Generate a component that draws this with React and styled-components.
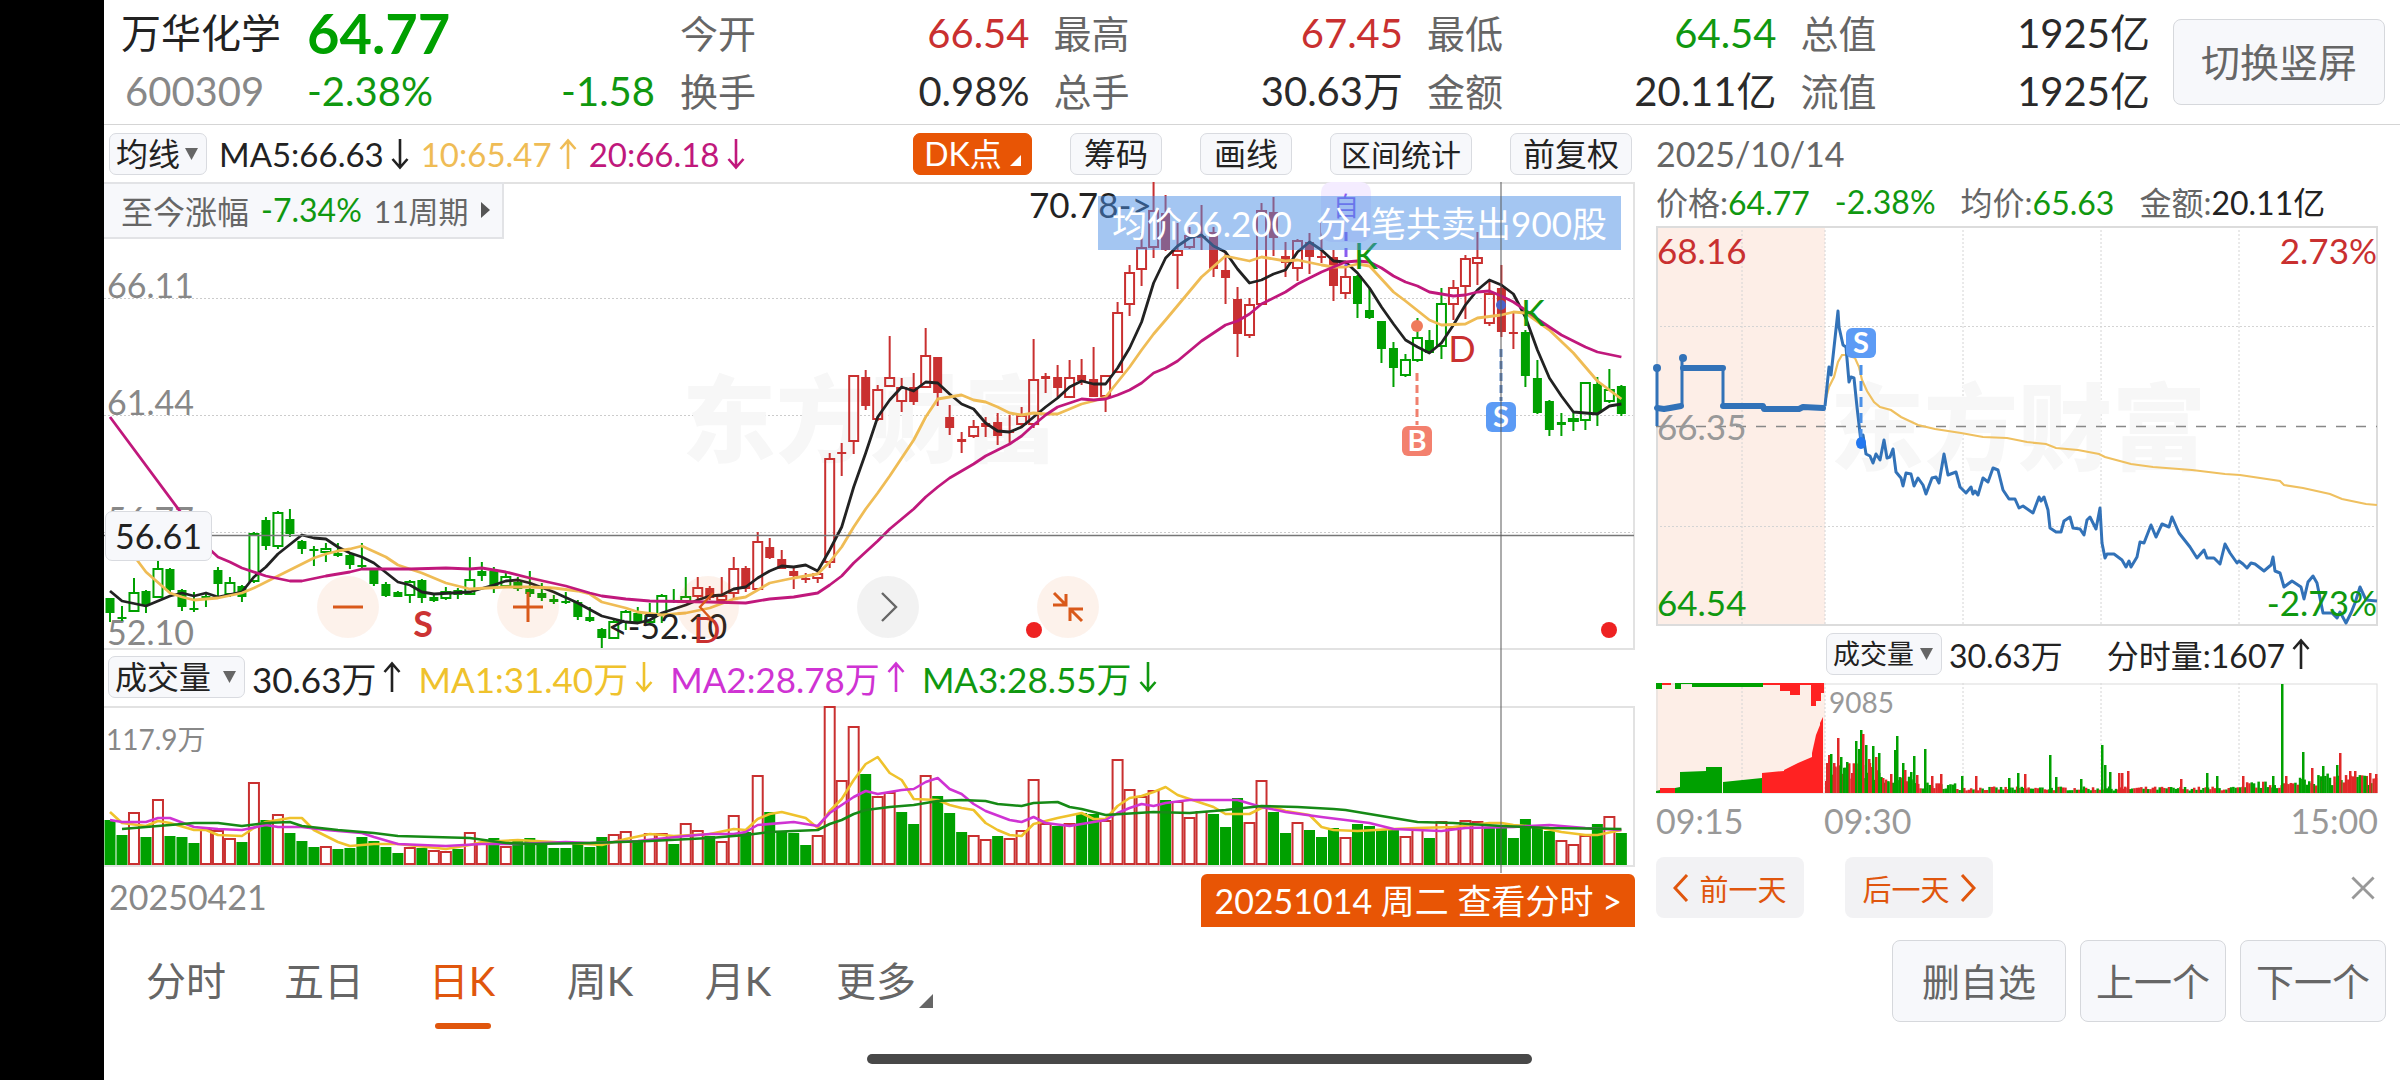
import React from 'react';
import styled, { createGlobalStyle } from 'styled-components';

const UP = '#c93030';
const DOWN = '#00a000';
const ORANGE = '#e85505';
const FONT = 'Lato, "Noto Sans CJK SC", sans-serif';

const GlobalStyle = createGlobalStyle`
	* {
		box-sizing: border-box;
	}

	body {
		margin: 0;
		background: #fff;
		color: #222;
		font-family: ${FONT};
	}

	button,
	select {
		margin: 0;
		padding: 0;
		border: 0;
		background: none;
		color: inherit;
		font: inherit;
		cursor: pointer;
	}
`;

/* ---------- data ---------- */

// [kind, high, bodyTop, bodyBottom, low], upper case kinds are filled
const CANDLES = [
	['G', 416, 416, 431, 440], ['g', 424, 435, 437, 439], ['g', 396, 410, 430, 430], ['G', 408, 409, 423, 431],
	['g', 379, 386, 416, 416], ['G', 386, 387, 408, 410], ['G', 407, 408, 425, 429], ['g', 410, 426, 428, 430],
	['g', 411, 414, 417, 425], ['G', 385, 388, 402, 414], ['g', 395, 400, 413, 415], ['G', 403, 404, 415, 420],
	['g', 350, 351, 400, 401], ['G', 335, 338, 364, 368], ['g', 329, 330, 365, 367], ['G', 327, 337, 352, 355],
	['G', 358, 359, 367, 372], ['g', 364, 367, 369, 384], ['g', 361, 366, 371, 380], ['g', 361, 371, 374, 375],
	['G', 372, 373, 383, 387], ['g', 361, 383, 385, 386], ['G', 386, 387, 402, 404], ['G', 400, 402, 414, 415],
	['G', 409, 410, 415, 415], ['g', 398, 399, 414, 421], ['G', 397, 398, 416, 421], ['G', 413, 415, 419, 420],
	['g', 405, 409, 417, 418], ['G', 406, 408, 413, 417], ['g', 375, 397, 413, 413], ['G', 380, 389, 394, 399],
	['G', 385, 389, 405, 411], ['g', 391, 394, 405, 406], ['G', 395, 400, 407, 409], ['G', 389, 407, 412, 415],
	['G', 401, 411, 416, 419], ['G', 413, 417, 420, 422], ['g', 410, 419, 420, 422], ['G', 418, 420, 435, 438],
	['G', 425, 435, 439, 440], ['G', 446, 447, 456, 466], ['g', 438, 439, 457, 457], ['g', 428, 429, 441, 448],
	['G', 425, 431, 441, 442], ['g', 421, 433, 441, 441], ['g', 412, 413, 433, 441], ['g', 407, 418, 420, 421],
	['g', 395, 414, 420, 420], ['r', 395, 405, 415, 417], ['R', 404, 406, 416, 418], ['r', 395, 413, 419, 422],
	['r', 375, 386, 412, 416], ['R', 384, 386, 407, 410], ['r', 350, 359, 408, 409], ['R', 356, 365, 376, 377],
	['R', 368, 377, 387, 387], ['R', 385, 389, 394, 407], ['R', 391, 396, 397, 401], ['r', 390, 391, 397, 401],
	['r', 271, 276, 381, 386], ['r', 261, 270, 271, 294], ['r', 193, 193, 260, 272], ['R', 188, 195, 224, 228],
	['r', 203, 207, 238, 239], ['r', 154, 195, 205, 205], ['r', 196, 205, 220, 230], ['R', 191, 205, 220, 223],
	['r', 146, 173, 206, 206], ['R', 175, 175, 211, 224], ['R', 223, 235, 246, 253], ['R', 250, 257, 260, 271],
	['r', 238, 244, 255, 256], ['R', 235, 241, 245, 255], ['R', 231, 240, 254, 263], ['r', 233, 249, 250, 261],
	['r', 225, 233, 243, 244], ['r', 157, 197, 243, 246], ['R', 191, 194, 197, 211], ['R', 183, 195, 206, 215],
	['r', 178, 195, 216, 216], ['R', 177, 193, 199, 203], ['R', 165, 197, 215, 215], ['r', 193, 193, 215, 230],
	['r', 120, 130, 191, 191], ['r', 83, 90, 123, 134], ['r', 51, 65, 88, 104], ['r', 0, 28, 66, 76],
	['R', 13, 31, 68, 69], ['r', 41, 68, 74, 107], ['r', 45, 53, 66, 67], ['r', 23, 54, 55, 68],
	['R', 45, 50, 87, 95], ['R', 70, 88, 96, 122], ['R', 105, 117, 152, 175], ['r', 116, 122, 154, 156],
	['r', 21, 28, 123, 123], ['R', 15, 30, 56, 74], ['R', 60, 74, 81, 95], ['r', 57, 58, 87, 99],
	['R', 51, 60, 75, 92], ['r', 41, 74, 75, 81], ['R', 68, 75, 104, 119], ['r', 83, 94, 112, 117],
	['G', 93, 94, 122, 136], ['G', 106, 128, 136, 137], ['G', 139, 139, 167, 181], ['G', 160, 166, 186, 205],
	['g', 172, 177, 194, 195], ['g', 136, 155, 179, 180], ['G', 148, 158, 171, 171], ['g', 106, 121, 165, 177],
	['r', 98, 105, 123, 138], ['r', 73, 76, 105, 137], ['r', 50, 75, 82, 103], ['r', 100, 111, 142, 144],
	['R', 83, 106, 150, 155], ['R', 130, 150, 152, 167], ['G', 148, 150, 194, 205], ['G', 178, 196, 231, 232],
	['G', 218, 219, 248, 254], ['G', 231, 240, 243, 254], ['g', 231, 236, 240, 249], ['g', 200, 200, 239, 248],
	['G', 195, 202, 231, 244], ['g', 187, 207, 220, 221], ['G', 203, 204, 232, 234],
];

// averages are stored as [candle index, y]
const MA5 = [
	[0, 409], [1, 419], [3, 424], [5, 414], [6, 411], [7, 414], [8, 411], [9, 415], [11, 410], [12, 395], [13, 385],
	[14, 372], [16, 353], [17, 356], [18, 357], [19, 365], [20, 371], [21, 375], [22, 381], [24, 400], [25, 403],
	[26, 410], [27, 412], [30, 410], [32, 403], [33, 399], [34, 398], [35, 401], [37, 410], [39, 421], [41, 434],
	[42, 437], [43, 440], [44, 441], [45, 438], [46, 431], [48, 423], [49, 418], [50, 414], [51, 413], [52, 407],
	[53, 405], [54, 396], [55, 389], [56, 384], [57, 385], [58, 383], [59, 389], [60, 368], [61, 345], [62, 305],
	[63, 271], [64, 235], [65, 218], [66, 205], [67, 209], [68, 200], [69, 201], [70, 212], [71, 222], [72, 227],
	[73, 241], [74, 249], [75, 250], [76, 245], [77, 235], [78, 225], [79, 216], [80, 205], [81, 199], [82, 202],
	[83, 202], [84, 186], [85, 166], [86, 140], [87, 101], [88, 76], [89, 64], [90, 56], [91, 53], [92, 64],
	[93, 70], [94, 87], [95, 101], [96, 98], [97, 92], [98, 88], [99, 70], [100, 60], [101, 68], [102, 79],
	[103, 80], [104, 91], [105, 106], [106, 125], [107, 142], [108, 158], [109, 165], [110, 171], [111, 161],
	[112, 143], [113, 123], [114, 108], [115, 98], [116, 103], [117, 112], [118, 135], [119, 168], [120, 196],
	[121, 214], [122, 230], [124, 232], [125, 224], [126, 222],
];
const MA10 = [
	[1, 358], [3, 390], [5, 411], [6, 415], [7, 418], [9, 416], [11, 411], [12, 406], [15, 388], [17, 376],
	[18, 372], [19, 369], [20, 367], [21, 364], [23, 375], [24, 383], [26, 391], [28, 401], [30, 407], [33, 405],
	[35, 405], [37, 406], [39, 409], [40, 412], [41, 420], [43, 426], [44, 430], [46, 433], [48, 431], [50, 426],
	[52, 417], [53, 415], [55, 401], [57, 396], [59, 392], [60, 380], [61, 365], [62, 345], [63, 327], [64, 311],
	[65, 294], [66, 276], [67, 258], [68, 235], [69, 217], [70, 215], [71, 213], [72, 218], [73, 220], [74, 225],
	[75, 231], [76, 233], [77, 231], [78, 232], [79, 232], [80, 227], [81, 222], [82, 219], [83, 215], [84, 200],
	[85, 185], [86, 168], [87, 152], [88, 138], [91, 95], [93, 74], [95, 79], [96, 75], [98, 79], [99, 78],
	[101, 83], [102, 85], [103, 85], [104, 82], [105, 84], [107, 110], [108, 119], [110, 138], [111, 143],
	[113, 142], [114, 136], [116, 133], [117, 130], [118, 131], [120, 148], [122, 171], [123, 185], [124, 199],
	[125, 208], [126, 217],
];
const MA20 = [
	[0, 235], [6, 332], [8, 364], [9, 375], [10, 380], [11, 386], [13, 394], [15, 399], [16, 399], [18, 394],
	[20, 390], [21, 387], [25, 387], [28, 386], [30, 387], [31, 386], [33, 390], [35, 396], [38, 404], [40, 411],
	[41, 414], [43, 417], [45, 419], [50, 420], [53, 421], [55, 417], [57, 415], [59, 411], [60, 403], [61, 394],
	[62, 381], [63, 370], [64, 359], [65, 347], [66, 337], [67, 327], [68, 315], [69, 305], [70, 296], [71, 289],
	[72, 282], [73, 274], [74, 268], [75, 262], [76, 254], [77, 243], [78, 233], [79, 225], [80, 221], [81, 217],
	[82, 218], [83, 217], [84, 213], [85, 208], [86, 201], [87, 191], [88, 186], [89, 179], [91, 159], [93, 143],
	[94, 139], [95, 132], [96, 122], [98, 110], [99, 102], [101, 90], [103, 80], [104, 79], [105, 80], [106, 86],
	[107, 94], [108, 100], [109, 104], [110, 110], [112, 114], [113, 113], [114, 110], [115, 109], [116, 114],
	[117, 120], [118, 128], [119, 137], [120, 145], [121, 153], [122, 159], [123, 165], [124, 170], [126, 175],
];

// bar heights, negative for a falling day
const VOLUMES = [
	-45, -30, 53, -28, 66, -29, -28, -22, 36, 35, 27, -23, 83, -45, 51, -32, -24, -18, 19, -16, -17, -28, -24, -18,
	-12, 18, -17, 15, 14, -16, 33, 23, -27, 19, -24, -27, -23, -17, -17, -22, -18, -28, 31, 34, -24, 32, 32, -21,
	42, 35, -29, 24, 50, -33, 90, -53, -34, -32, -20, 30, 159, 85, 139, -91, 69, 73, -53, -41, 90, -69, -52, -33,
	30, 26, -29, 27, 35, 86, 42, -39, 42, -52, -51, 45, 106, 76, 69, 75, -65, 64, 48, 54, -51, -38, -67, 43, 85,
	-53, -32, 43, -35, -28, -37, 28, -41, -39, -35, -36, 29, 38, -27, 44, 38, 45, 44, -38, -39, -27, -46, -38,
	-34, 25, 21, 30, -41, 49, -32,
];
const VOL_MA1 = [
	[0, 106], [1, 117], [3, 120], [4, 115], [5, 117], [7, 124], [8, 124], [9, 129], [11, 130], [12, 122],
	[13, 116], [15, 112], [16, 112], [17, 124], [19, 136], [20, 140], [22, 138], [24, 138], [28, 143], [30, 139],
	[31, 136], [34, 134], [37, 136], [41, 139], [43, 133], [45, 128], [47, 130], [50, 128], [52, 123], [53, 124],
	[54, 113], [55, 108], [56, 106], [58, 112], [59, 122], [60, 105], [61, 93], [62, 74], [63, 58], [64, 51],
	[65, 67], [66, 74], [67, 93], [69, 94], [70, 99], [71, 102], [72, 104], [73, 117], [74, 124], [75, 129],
	[76, 130], [77, 118], [78, 115], [79, 112], [81, 107], [82, 113], [83, 113], [84, 100], [85, 92], [86, 90],
	[87, 86], [88, 81], [89, 89], [91, 97], [92, 101], [93, 108], [95, 108], [96, 102], [97, 101], [98, 105],
	[100, 109], [101, 121], [102, 124], [104, 125], [107, 123], [109, 122], [112, 121], [115, 117], [116, 117],
	[117, 119], [119, 121], [121, 126], [123, 129], [124, 129], [126, 124],
];
const VOL_MA2 = [
	[0, 114], [1, 116], [3, 116], [4, 112], [5, 112], [7, 121], [9, 123], [11, 124], [13, 119], [14, 121],
	[16, 121], [18, 124], [21, 127], [22, 131], [24, 138], [28, 140], [31, 138], [34, 138], [38, 136], [40, 137],
	[44, 135], [48, 130], [50, 128], [52, 128], [53, 126], [54, 119], [57, 116], [59, 120], [60, 107], [62, 91],
	[63, 85], [64, 88], [66, 84], [67, 83], [68, 76], [69, 72], [70, 83], [71, 88], [72, 98], [73, 105],
	[75, 114], [76, 116], [77, 111], [78, 117], [80, 120], [83, 114], [84, 107], [85, 102], [86, 98], [87, 100],
	[88, 97], [90, 94], [94, 94], [96, 101], [98, 106], [101, 111], [103, 114], [105, 117], [107, 123],
	[111, 125], [113, 122], [117, 121], [120, 119], [123, 122], [126, 124],
];
const VOL_MA3 = [
	[1, 123], [3, 121], [4, 120], [7, 117], [9, 117], [11, 120], [13, 117], [15, 116], [16, 120], [19, 124],
	[22, 127], [24, 130], [30, 132], [33, 137], [35, 138], [40, 137], [45, 135], [50, 132], [53, 129], [55, 126],
	[59, 124], [60, 118], [61, 114], [62, 108], [63, 104], [65, 101], [67, 99], [69, 95], [71, 94], [73, 95],
	[74, 98], [76, 100], [77, 97], [79, 96], [80, 101], [81, 103], [83, 109], [87, 106], [90, 107], [93, 104],
	[96, 100], [99, 101], [102, 103], [103, 104], [105, 108], [109, 116], [112, 117], [116, 120], [120, 122],
	[126, 123],
];

const MINUTE_PRICE =
	'169,180 173,141 175,149 182,85 183,101 187,119 190,121 193,156 195,151 198,152 201,181 205,216 207,209 210,228 214,230 217,237 220,228 224,234 228,214 231,232 234,231 237,223 240,246 245,252 247,260 250,247 255,248 258,260 262,252 267,259 270,268 276,252 280,251 283,257 288,228 292,249 300,246 304,261 310,267 315,261 317,268 319,265 322,269 327,252 332,256 337,242 342,244 347,264 353,273 359,273 363,282 367,280 377,287 383,271 385,275 388,271 392,284 394,302 400,306 405,306 408,295 414,291 417,302 424,303 428,309 431,294 434,291 440,303 444,282 446,317 449,332 451,328 458,328 466,334 470,341 473,335 475,341 481,331 484,316 488,317 495,299 500,311 506,298 513,301 516,291 523,307 534,321 541,332 548,324 551,332 558,332 564,338 569,318 574,327 581,337 583,335 587,338 591,342 595,337 599,338 608,345 615,339 617,331 619,345 624,347 628,361 636,355 645,361 648,373 652,356 657,350 661,357 667,387 676,387 681,392 684,386 690,397 695,387 699,377 704,361 710,374 721,375';
const MINUTE_AVERAGE =
	'169,176 173,161 178,151 182,136 186,129 191,129 199,132 203,141 206,154 211,165 218,176 224,181 235,184 245,191 262,199 279,203 305,207 327,211 351,212 371,216 390,218 400,222 422,224 443,228 449,231 475,238 497,241 536,244 569,248 584,249 624,255 628,259 647,262 674,268 686,273 710,278 721,279';

// [x, height], negative heights are sell-side minutes
const MINUTE_PEAKS = [
	[171, 30], [173, 38], [175, -39], [178, 30], [182, 55], [185, -36], [188, -25], [191, -31], [196, 20],
	[200, -52], [203, -44], [205, -63], [207, 59], [210, -48], [213, 34], [217, -47], [220, 36], [223, -40],
	[227, 15], [235, 19], [239, -43], [241, -57], [247, -30], [249, 23], [255, -21], [258, -37], [261, 18],
	[269, -44], [276, 17], [285, 19], [306, -17], [320, 17], [353, -15], [362, -20], [369, 19], [394, -38],
	[400, -16], [425, -14], [446, -48], [449, -28], [454, -21], [463, 20], [466, 20], [472, 22], [525, 14],
	[551, -20], [561, -17], [587, 17], [617, -17], [626, -109], [630, 17], [647, -41], [656, 25], [667, -27],
	[681, -28], [684, 40], [694, 22], [699, 22], [709, -17], [714, 20], [720, 19],
];

// pre-open auction: [from, to, startHeight, endHeight, colour]
const AUCTION_MATCHED = [
	[0, 4, 2, 3, DOWN], [4, 19, 5, 5, '#f22'], [19, 24, 5, 6, DOWN], [24, 50, 21, 22, DOWN], [50, 66, 26, 26, DOWN],
	[67, 106, 11, 15, DOWN], [106, 128, 20, 22, '#f22'], [128, 142, 23, 30, '#f22'], [142, 156, 30, 36, '#f22'],
	[156, 160, 40, 58, '#f22'], [160, 164, 58, 68, '#f22'], [164, 167, 70, 76, '#f22'],
];
const AUCTION_LEFT = [
	[0, 6, 6, DOWN], [6, 15, 2, '#f22'], [19, 25, 6, DOWN], [25, 36, 1, DOWN], [36, 107, 4, DOWN], [107, 124, 2, '#f22'],
	[124, 134, 8, '#f22'], [134, 144, 12, '#f22'], [144, 155, 2, '#f22'], [155, 160, 23, '#f22'],
	[160, 165, 18, '#f22'], [165, 168, 10, '#f22'],
];

const STATS = [
	[['今开', '66.54', UP], ['换手', '0.98%']],
	[['最高', '67.45', UP], ['总手', '30.63万']],
	[['最低', '64.54', '#109810'], ['金额', '20.11亿']],
	[['总值', '1925亿'], ['流值', '1925亿']],
];
const TABS = ['分时', '五日', '日K', '周K', '月K', '更多'];

const candleX = i => 6 + i * 11.995;
const toPoints = list => list.map(([i, y]) => `${candleX(i).toFixed(1)},${y}`).join(' ');

function minuteBars() {
	const bars = [];
	let seed = 7;
	const random = () => {
		seed = (seed * 16807) % 2147483647;
		return seed / 2147483647;
	};
	for (let x = 170; x < 721; x += 2.3) {
		let base = 5;
		if (x < 225) base = 24;
		else if (x < 262) base = 13;
		else if (x < 300) base = 8;
		else if (x > 640) base = 15;
		else if (x > 590) base = 9;
		const height = base * (0.5 + random() * 0.8);
		bars.push({ x, height, color: random() > 0.5 ? '#e02828' : DOWN });
	}
	MINUTE_PEAKS.forEach(([x, h]) => {
		bars.push({ x, height: Math.abs(h), color: h > 0 ? '#e02828' : DOWN });
	});
	return bars;
}
const MINUTE_BARS = minuteBars();

/* ---------- layout ---------- */

const Screen = styled.div`
	display: grid;
	grid-template-columns: 104px minmax(0, 1fr);
	min-height: 100vh;
`;

const Bezel = styled.div`
	background: #000;
`;

const Page = styled.div`
	display: flex;
	flex-direction: column;
`;

const Header = styled.header`
	display: flex;
	align-items: center;
	height: 125px;
	padding: 0 15px 0 17px;
	border-bottom: 1px solid #d5d5d5;
	font-size: 40px;
`;

const Identity = styled.div`
	display: grid;
	grid-template-columns: 186px 120px 228px;
	width: 559px;
	line-height: 58px;
`;

const Name = styled.h1`
	margin: 0;
	font-size: 40px;
	font-weight: 400;
`;

const Code = styled.span`
	padding-left: 4px;
	color: #888;
`;

const Price = styled.strong`
	grid-column: span 2;
	color: ${DOWN};
	font-size: 56px;
`;

const Change = styled.span`
	color: #109810;
	text-align: ${p => (p.$end ? 'right' : 'left')};
`;

const Stats = styled.dl`
	flex: 1;
	display: grid;
	grid-template-columns: repeat(4, 1fr);
	column-gap: 24px;
	margin: 0 23px 0 0;
`;

const Stat = styled.div`
	display: flex;
	justify-content: space-between;
	line-height: 58px;
	dt {
		color: #666;
		font-size: 38px;
	}
	dd {
		margin: 0;
		color: ${p => p.$color || '#2a2a2a'};
	}
`;

const BoxButton = styled.button`
	padding: 0 ${p => p.$pad || 24}px 4px;
	height: ${p => p.$height || 82}px;
	border: 1px solid #d6d8dc;
	border-radius: 8px;
	background: #f7f8fb;
	color: #666;
	font-size: ${p => p.$size || 38}px;
`;

const Main = styled.main`
	display: grid;
	grid-template-columns: 1531fr 744fr;
	column-gap: 21px;
`;

const Left = styled.section`
	position: relative;
`;

const Right = styled.section`
	padding-right: 22px;
`;

const Bar = styled.div`
	display: flex;
	align-items: center;
	height: ${p => p.$height}px;
	gap: ${p => p.$gap || 0}px;
	padding-left: ${p => p.$left || 0}px;
	padding-bottom: ${p => p.$bottom || 0}px;
	font-size: ${p => p.$size || 32}px;
	white-space: nowrap;
`;

const Spacer = styled.div`
	flex: 1;
`;

const Reading = styled.span`
	display: inline-flex;
	align-items: center;
	gap: 7px;
	color: ${p => p.$color || '#222'};
`;

const PickerBox = styled.label`
	display: inline-flex;
	align-items: center;
	gap: ${p => p.$gap || 6}px;
	height: 42px;
	padding: 0 8px 0 6px;
	border: 1px solid #d9dbe0;
	border-radius: 7px;
	background: #f7f8fb;
	select {
		appearance: none;
		font-size: ${p => p.$size || 32}px;
		line-height: 40px;
	}
`;

const Tool = styled.button`
	height: 42px;
	margin-right: 38px;
	padding: 0 ${p => p.$pad || 13}px;
	border: 1px solid ${p => (p.$active ? ORANGE : '#d9dbe0')};
	border-radius: 7px;
	background: ${p => (p.$active ? ORANGE : '#f7f8fb')};
	color: ${p => (p.$active ? '#fff' : '#222')};
	font-size: ${p => (p.$small ? 30 : 32)}px;
	line-height: 40px;
	&:last-child {
		margin-right: 3px;
	}
`;

const ChartArea = styled.div`
	position: relative;
	svg.plot {
		display: block;
		width: 100%;
		overflow: visible;
	}
`;

const RangeButton = styled.button`
	position: absolute;
	top: 0;
	left: 0;
	display: flex;
	align-items: center;
	gap: 12px;
	height: 57px;
	padding: 0 12px 2px 17px;
	border: 2px solid #e2e3e6;
	border-left: 0;
	background: #f7f8fb;
	color: #666;
	font-size: 32px;
	span:last-of-type {
		font-size: 30px;
	}
`;

const PriceTag = styled.output`
	position: absolute;
	top: 70.3%;
	left: 1px;
	padding: 0 9px;
	border: 1px solid #d9dbe0;
	border-radius: 7px;
	background: #f7f8fb;
	font-size: 34px;
	line-height: 48px;
`;

const TradeTip = styled.div`
	position: absolute;
	top: 14px;
	right: 14px;
	display: flex;
	gap: 24px;
	padding: 0 14px;
	background: rgba(73, 141, 229, 0.5);
	color: #fff;
	font-size: 35px;
	line-height: 54px;
`;

const Floaters = styled.div`
	position: absolute;
	left: 213px;
	bottom: 12px;
	display: flex;
	gap: 118px;
`;

const RoundButton = styled.button`
	display: flex;
	align-items: center;
	justify-content: center;
	width: 62px;
	height: 62px;
	border-radius: 50%;
	background: ${p => (p.$grey ? 'rgba(90, 90, 90, 0.08)' : 'rgba(232, 85, 5, 0.08)')};
	color: ${p => (p.$grey ? '#666' : '#d9591a')};
`;

const CrossLine = styled.div`
	position: absolute;
	top: 57px;
	bottom: 54px;
	left: 91.2%;
	width: 2px;
	background: rgba(90, 90, 90, 0.5);
`;

const DateRow = styled.div`
	display: flex;
	align-items: flex-end;
	justify-content: space-between;
	height: 60px;
	padding-left: 5px;
	color: #888;
	font-size: 34px;
	line-height: 52px;
`;

const StartDate = styled.time`
	align-self: flex-start;
	line-height: 60px;
`;

const DayButton = styled.button`
	height: 53px;
	padding: 0 13px;
	border-radius: 6px 6px 0 0;
	background: ${ORANGE};
	color: #fff;
	font-size: 34px;
	line-height: 52px;
`;

const Quote = styled.span`
	color: #666;
	b {
		color: ${p => p.$color || '#109810'};
		font-weight: 400;
	}
`;

const TimeAxis = styled.div`
	display: grid;
	grid-template-columns: 168fr 300fr 254fr;
	color: #999;
	font-size: 34px;
	line-height: 54px;
	span:last-child {
		text-align: right;
	}
`;

const DayNav = styled.div`
	display: flex;
	align-items: center;
	gap: 41px;
	padding: 9px 3px 0 0;
`;

const DayStep = styled.button`
	display: flex;
	align-items: center;
	justify-content: center;
	gap: 10px;
	width: 148px;
	height: 61px;
	border-radius: 8px;
	background: #f2f2f4;
	color: #e0560d;
	font-size: 29px;
`;

const CloseButton = styled.button`
	display: flex;
	margin-left: auto;
	color: #999;
`;

const Footer = styled.footer`
	display: flex;
	align-items: flex-start;
	gap: 14px;
	padding: 13px 14px 0 13px;
`;

const TabList = styled.nav`
	display: flex;
	flex: 1;
`;

const Tab = styled.button`
	position: relative;
	width: 138px;
	height: 89px;
	padding-bottom: 12px;
	color: ${p => (p.$active ? '#e0560d' : '#666')};
	font-size: 40px;
	&::after {
		content: '';
		position: absolute;
		bottom: 0;
		left: 42px;
		width: 56px;
		height: 6px;
		border-radius: 3px;
		background: ${p => (p.$active ? '#e0560d' : 'transparent')};
	}
	svg {
		position: absolute;
		right: 12px;
		bottom: 21px;
	}
`;

const HomeBar = styled.div`
	width: 665px;
	height: 10px;
	margin: 25px auto 16px 763px;
	border-radius: 5px;
	background: #484848;
`;

/* ---------- small drawings ---------- */

function Arrow({ up }) {
	return (
		<svg width="18" height="32" viewBox="0 0 18 32" fill="none" stroke="currentColor" strokeWidth="2.6" aria-hidden="true">
			<path d={up ? 'M9 31V2M1.500 11L9 2.500L16.500 11' : 'M9 1V30M1.500 21L9 29.500L16.500 21'} />
		</svg>
	);
}

function Caret() {
	return (
		<svg width="13" height="12" viewBox="0 0 13 12" fill="#666" aria-hidden="true">
			<path d="M0 0H13L6.500 12Z" />
		</svg>
	);
}

function Corner({ color, size = 12 }) {
	return (
		<svg width={size} height={size} viewBox="0 0 12 12" fill={color} aria-hidden="true">
			<path d="M12 0V12H0Z" />
		</svg>
	);
}

function Icon({ d, width = 3, size = 34 }) {
	return (
		<svg width={size} height={size} viewBox="0 0 34 34" fill="none" stroke="currentColor" strokeWidth={width} aria-hidden="true">
			<path d={d} />
		</svg>
	);
}

function Picker({ label, value, size, gap }) {
	return (
		<PickerBox $size={size} $gap={gap}>
			<select aria-label={label} defaultValue={value}>
				<option>{value}</option>
			</select>
			<Caret />
		</PickerBox>
	);
}

function Flag({ x, y, text, color }) {
	return (
		<g>
			<rect x={x - 15} y={y} width="30" height="30" rx="6" fill={color} />
			<text x={x} y={y + 25} fontSize="29" fontWeight="700" fill="#fff" textAnchor="middle">
				{text}
			</text>
		</g>
	);
}

/* ---------- charts ---------- */

function Candle({ index, item }) {
	const [kind, high, top, bottom, low] = item;
	const color = kind.toLowerCase() === 'r' ? UP : DOWN;
	const filled = kind === 'R' || kind === 'G';
	const x = candleX(index);
	const height = Math.max(bottom - top, 2);
	return (
		<g stroke={color} strokeWidth="2">
			<path d={`M${x} ${high}V${top}M${x} ${bottom}V${low}`} />
			{filled || height < 4 ? (
				<rect x={x - 4.5} y={top} width="9" height={height} fill={color} stroke="none" />
			) : (
				<rect x={x - 4.5} y={top + 1} width="9" height={height - 2} fill="none" />
			)}
		</g>
	);
}

function DailyChart() {
	return (
		<svg className="plot" viewBox="0 0 1531 468" fontFamily={FONT} role="img" aria-label="日K">
			<g stroke="#ccc" strokeDasharray="2 2">
				<path d="M0 116.500H1530M0 233.500H1530M0 350.500H1530" />
			</g>
			<text x="578" y="273" fontSize="94" fontWeight="900" fill="#f7f7f7">
				东方财富
			</text>
			<path d="M0 1H1530V467H0" fill="none" stroke="#e2e2e2" strokeWidth="2" />
			<g fontSize="34" fill="#888">
				<text x="3" y="116">66.11</text>
				<text x="3" y="233">61.44</text>
				<text x="3" y="350">56.77</text>
				<text x="3" y="463">52.10</text>
			</g>
			{CANDLES.map((item, i) => (
				<Candle key={i} index={i} item={item} />
			))}
			<g fill="none" strokeWidth="2.8" strokeLinejoin="round">
				<polyline points={toPoints(MA5)} stroke="#222" />
				<polyline points={toPoints(MA10)} stroke="#efbc55" />
				<polyline points={toPoints(MA20)} stroke="#c0187c" />
			</g>
			<path d="M0 353.500H1530" stroke="#777" strokeWidth="1.500" />
			<rect x="1217" y="0" width="50" height="60" rx="10" fill="#f4ecff" />
			<text x="1242" y="34" fontSize="26" fill="#8a5cf0" textAnchor="middle">
				自
			</text>
			<path d="M1242 50V84" stroke="#8a5cf0" strokeWidth="3" strokeDasharray="9 7" />
			<text x="925" y="36" fontSize="35" fill="#222">
				70.78-&gt;
			</text>
			<text x="504" y="457" fontSize="34" fill="#222">
				&lt;-52.10
			</text>
			<g fontSize="36" textAnchor="middle">
				<text x="319" y="455" fill="#c33" fontWeight="700">S</text>
				<text x="603" y="461" fill={UP}>D</text>
				<text x="1358" y="180" fill={UP}>D</text>
				<text x="1262" y="87" fill="#109810">K</text>
				<text x="1429" y="144" fill="#109810">K</text>
			</g>
			<circle cx="1313" cy="144" r="6" fill="#ef7a5c" />
			<path d="M1313 191V243" stroke="#f0806e" strokeWidth="3" strokeDasharray="8 4" />
			<Flag x={1313} y={244} text="B" color="#f3806e" />
			<circle cx="1397" cy="123" r="5" fill="#4a63c8" />
			<path d="M1397 167V219" stroke="#5c87c4" strokeWidth="3" strokeDasharray="8 4" />
			<Flag x={1397} y={220} text="S" color="#5c9bf5" />
			<circle cx="930" cy="448" r="8" fill="#e22" />
			<circle cx="1505" cy="448" r="8" fill="#e22" />
		</svg>
	);
}

function VolumeChart() {
	return (
		<svg className="plot" viewBox="0 0 1531 161" fontFamily={FONT} role="img" aria-label="成交量">
			<path d="M0 1H1530V160H0" fill="none" stroke="#e2e2e2" strokeWidth="2" />
			<text x="2" y="44" fontSize="28" fill="#888">
				117.9万
			</text>
			{VOLUMES.map((v, i) =>
				v < 0 ? (
					<rect key={i} x={candleX(i) - 5.5} y={159 + v} width="11" height={-v} fill={DOWN} />
				) : (
					<rect key={i} x={candleX(i) - 5} y={160 - v} width="10" height={v - 2} fill="#fff" stroke={UP} strokeWidth="2" />
				)
			)}
			<g fill="none" strokeWidth="2.6" strokeLinejoin="round">
				<polyline points={toPoints(VOL_MA1)} stroke="#efc22c" />
				<polyline points={toPoints(VOL_MA2)} stroke="#cf33d3" />
				<polyline points={toPoints(VOL_MA3)} stroke="#168a16" />
			</g>
		</svg>
	);
}

function MinuteChart() {
	return (
		<svg className="plot" viewBox="0 0 722 400" fontFamily={FONT} role="img" aria-label="分时">
			<rect width="169" height="400" fill="#fdeee7" />
			<g stroke="#d4d4d4" strokeDasharray="2 2">
				<path d="M86 0V399M169 0V399M307 0V399M445 0V399M583 0V399M0 100.500H721M0 300.500H721" />
			</g>
			<text x="174" y="237" fontSize="94" fontWeight="900" fill="#f7f7f7">
				东方财富
			</text>
			<rect x="1" y="1" width="720" height="398" fill="none" stroke="#dcdcdc" strokeWidth="2" />
			<path d="M0 200.500H721" stroke="#888" strokeWidth="1.500" strokeDasharray="10 10" />
			<text x="1" y="214" fontSize="35" fill="#999">66.35</text>
			<polyline points={MINUTE_AVERAGE} fill="none" stroke="#efc060" strokeWidth="2.200" />
			<g fill="none" stroke="#3272b8" strokeWidth="3" strokeLinejoin="round">
				<polyline points={MINUTE_PRICE} />
				<path d="M1 142V200M26 180V132M67 142V180" />
				<path d="M1 182L8 183L14 182L25 180M27 142H67M67 180H107L108 183H143L147 181L167 182" strokeWidth="6" strokeLinecap="round" />
			</g>
			<circle cx="1" cy="142" r="4" fill="#3272b8" />
			<circle cx="27" cy="132" r="4" fill="#3272b8" />
			<path d="M205 139V212" stroke="#4a90e8" strokeWidth="3" strokeDasharray="10 6" />
			<ellipse cx="205" cy="217" rx="5" ry="6" fill="#2277f0" />
			<Flag x={205} y={102} text="S" color="#5c9bf5" />
			<g fontSize="35">
				<text x="1" y="38" fill={UP}>68.16</text>
				<text x="721" y="38" fill={UP} textAnchor="end">2.73%</text>
				<text x="1" y="390" fill="#109810">64.54</text>
				<text x="721" y="390" fill="#109810" textAnchor="end">-2.73%</text>
			</g>
		</svg>
	);
}

function MinuteVolume() {
	return (
		<svg className="plot" viewBox="0 0 722 111" fontFamily={FONT} role="img" aria-label="分时量">
			<rect width="169" height="110" fill="#fdeee7" />
			<path d="M86 0V110M169 0V110M307 0V110M445 0V110M583 0V110" stroke="#d4d4d4" strokeDasharray="2 2" />
			<rect x="1" y="1" width="720" height="109" fill="none" stroke="#dcdcdc" />
			{AUCTION_MATCHED.map(([from, to, a, b, color]) => (
				<path key={from} d={`M${from} 110V${110 - a}L${to} ${110 - b}V110Z`} fill={color} />
			))}
			{AUCTION_LEFT.map(([from, to, h, color]) => (
				<rect key={from} x={from} y="0" width={to - from} height={h} fill={color} />
			))}
			{MINUTE_BARS.map((bar, i) => (
				<rect key={i} x={bar.x - 1} y={110 - bar.height} width="2.500" height={bar.height} fill={bar.color} />
			))}
			<text x="173" y="30" fontSize="28" fill="#999">
				9085
			</text>
		</svg>
	);
}

/* ---------- page ---------- */

function TopHeader() {
	return (
		<Header>
			<Identity>
				<Name>万华化学</Name>
				<Price>64.77</Price>
				<Code>600309</Code>
				<Change>-2.38%</Change>
				<Change $end>-1.58</Change>
			</Identity>
			<Stats>
				{STATS.map((column, i) => (
					<div key={i}>
						{column.map(([label, value, color]) => (
							<Stat key={label} $color={color}>
								<dt>{label}</dt>
								<dd>{value}</dd>
							</Stat>
						))}
					</div>
				))}
			</Stats>
			<BoxButton $pad={27} $height={86} $size={39}>切换竖屏</BoxButton>
		</Header>
	);
}

function DailyPanel() {
	return (
		<Left>
			<Bar $height={57} $gap={12} $left={5} $size={33}>
				<Picker label="均线" value="均线" gap={4} />
				<Reading>MA5:66.63<Arrow /></Reading>
				<Reading $color="#efbc55">10:65.47<Arrow up /></Reading>
				<Reading $color="#c0187c">20:66.18<Arrow /></Reading>
				<Spacer />
				<div>
					<Tool $active $pad={10}>
						DK点 <Corner color="#fff" size={11} />
					</Tool>
					<Tool>筹码</Tool>
					<Tool>画线</Tool>
					<Tool $small $pad={10}>区间统计</Tool>
					<Tool $pad={12}>前复权</Tool>
				</div>
			</Bar>
			<ChartArea>
				<DailyChart />
				<RangeButton>
					<span>至今涨幅</span>
					<Change>-7.34%</Change>
					<span>11周期</span>
					<svg width="9" height="16" viewBox="0 0 9 16" fill="#555" aria-hidden="true">
						<path d="M0 0L9 8L0 16Z" />
					</svg>
				</RangeButton>
				<PriceTag>56.61</PriceTag>
				<TradeTip>
					<span>均价66.200</span>
					<span>分4笔共卖出900股</span>
				</TradeTip>
				<Floaters>
					<RoundButton aria-label="缩小"><Icon d="M2 17H32" /></RoundButton>
					<RoundButton aria-label="放大"><Icon d="M2 17H32M17 2V32" /></RoundButton>
					<RoundButton aria-label="左移"><Icon d="M22 3L9 17L22 31" width={2.4} /></RoundButton>
					<RoundButton $grey aria-label="右移"><Icon d="M11 3L25 17L11 31" width={2.4} /></RoundButton>
					<RoundButton aria-label="收起">
						<Icon d="M3 3L14 14M15 4V15H2M31 31L20 20M19 31V19H32" width={3} />
					</RoundButton>
				</Floaters>
			</ChartArea>
			<Bar $height={56} $gap={17} $left={4} $size={35} $bottom={2}>
				<Reading>
					<Picker label="指标" value="成交量" gap={11} />
					30.63万<Arrow up />
				</Reading>
				<Reading $color="#efc22c">MA1:31.40万<Arrow /></Reading>
				<Reading $color="#cf33d3">MA2:28.78万<Arrow up /></Reading>
				<Reading $color="#109810">MA3:28.55万<Arrow /></Reading>
			</Bar>
			<ChartArea>
				<VolumeChart />
			</ChartArea>
			<DateRow>
				<StartDate>20250421</StartDate>
				<DayButton>20251014 周二 查看分时 &gt;</DayButton>
			</DateRow>
			<CrossLine />
		</Left>
	);
}

function MinutePanel() {
	return (
		<Right>
			<Bar $height={56} $size={34}>
				<Quote as="time">2025/10/14</Quote>
			</Bar>
			<Bar $height={45} $gap={25} $bottom={5}>
				<Quote>价格:<b>64.77</b></Quote>
				<Quote><b>-2.38%</b></Quote>
				<Quote>均价:<b>65.63</b></Quote>
				<Quote $color="#222">金额:<b>20.11亿</b></Quote>
			</Bar>
			<ChartArea>
				<MinuteChart />
			</ChartArea>
			<Bar $height={57} $gap={44} $left={170} $bottom={2}>
				<Reading>
					<Picker label="分时指标" value="成交量" size={27} />
					30.63万
				</Reading>
				<Reading>分时量:1607<Arrow up /></Reading>
			</Bar>
			<ChartArea>
				<MinuteVolume />
			</ChartArea>
			<TimeAxis>
				<span>09:15</span>
				<span>09:30</span>
				<span>15:00</span>
			</TimeAxis>
			<DayNav>
				<DayStep>
					<svg width="16" height="28" viewBox="0 0 16 28" fill="none" stroke="currentColor" strokeWidth="3" aria-hidden="true">
						<path d="M14 1L2 14L14 27" />
					</svg>
					前一天
				</DayStep>
				<DayStep>
					后一天
					<svg width="16" height="28" viewBox="0 0 16 28" fill="none" stroke="currentColor" strokeWidth="3" aria-hidden="true">
						<path d="M2 1L14 14L2 27" />
					</svg>
				</DayStep>
				<CloseButton aria-label="关闭">
					<Icon d="M2 2L32 32M32 2L2 32" width={4} size={24} />
				</CloseButton>
			</DayNav>
		</Right>
	);
}

function App() {
	return (
		<Screen>
			<GlobalStyle />
			<Bezel />
			<Page>
				<TopHeader />
				<Main>
					<DailyPanel />
					<MinutePanel />
				</Main>
				<Footer>
					<TabList>
						{TABS.map(name => (
							<Tab key={name} $active={name === '日K'}>
								{name}
								{name === '更多' && <Corner color="#666" size={14} />}
							</Tab>
						))}
					</TabList>
					<BoxButton $pad={29}>删自选</BoxButton>
					<BoxButton $pad={15}>上一个</BoxButton>
					<BoxButton $pad={15}>下一个</BoxButton>
				</Footer>
				<HomeBar />
			</Page>
		</Screen>
	);
}

export default App;
